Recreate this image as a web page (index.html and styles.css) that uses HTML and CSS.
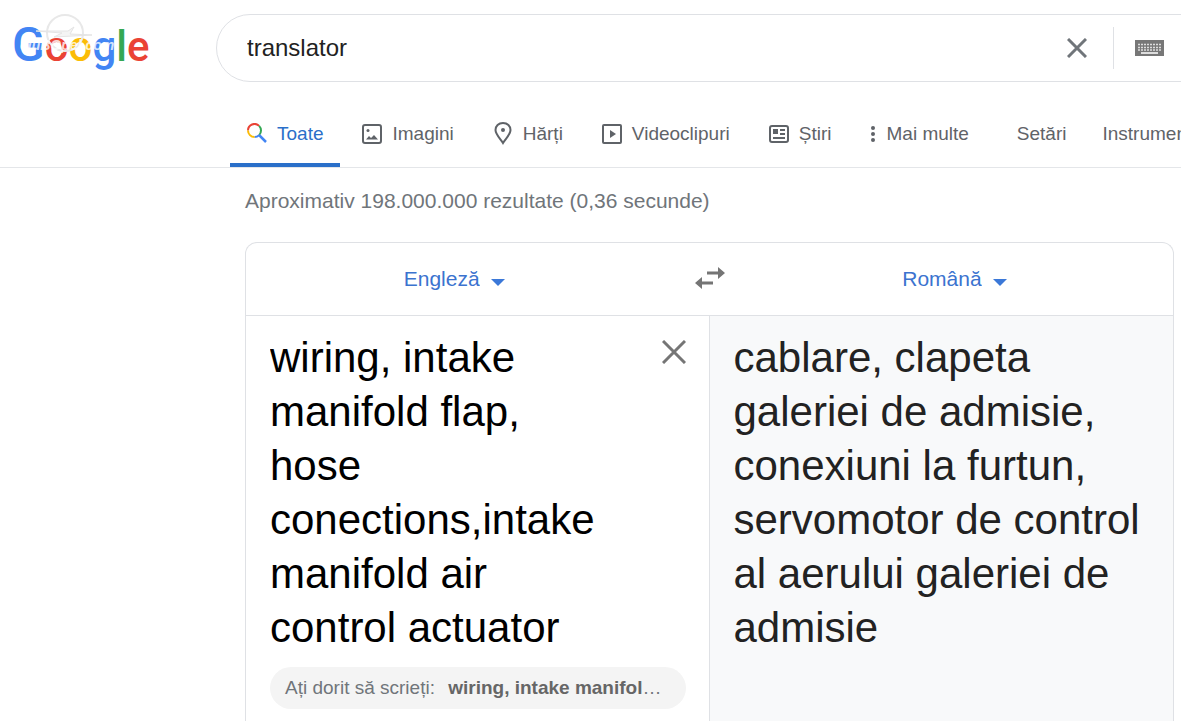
FILE: index.html
```html
<!DOCTYPE html>
<html lang="ro">
<head>
  <meta charset="UTF-8">
  <meta name="viewport" content="width=device-width, initial-scale=1.0">
  <title>translator - Căutare Google</title>
  <link rel="stylesheet" href="styles.css">
</head>
<body>
  <header class="header">
    <div class="logo">
      <a class="wordmark" href="#"><span class="capital blue">G</span><span class="red">o</span><span class="yellow">o</span><span class="blue">g</span><span class="green">l</span><span class="red">e</span></a>
      <svg class="watermark" width="120" height="60" viewBox="0 0 120 60">
        <circle cx="53" cy="19" r="18" fill="none" stroke="#e8e8e8" stroke-width="2"/>
        <path d="M24 17L56 17L62 13L58 20L80 21L42 23L50 19Z" fill="#f4f4f4" stroke="#e4e4e4" stroke-width="1"/>
        <text x="8" y="36">cluBOpel.com</text>
      </svg>
    </div>
    <form class="search">
      <input type="text" aria-label="Căutare" value="translator">
      <button type="button" aria-label="Șterge">
        <svg width="20" height="20" viewBox="0 0 20 20" stroke="#70757a" stroke-width="3"><path d="M1 1L19 19M19 1L1 19"/></svg>
      </button>
      <span class="divider"></span>
      <button type="button" aria-label="Tastatură">
        <svg width="29" height="16" viewBox="0 0 29 16">
          <rect width="29" height="16" fill="#777"/>
          <path d="M3 4.500H27M3 7.500H27M3 10H27" stroke="#ddd" stroke-width="1.500" stroke-dasharray="2 1"/>
          <path d="M6 13H23" stroke="#fff" stroke-width="1.500"/>
        </svg>
      </button>
    </form>
  </header>

  <nav class="tabs">
    <a class="tab active" href="#">
      <svg width="20" height="22" viewBox="0 0 20 22" fill="none" stroke-width="2">
        <path d="M1 7.500A6.500 6.500 0 0 1 12.100 2.900" stroke="#ea4335"/>
        <path d="M12.100 2.900A6.500 6.500 0 0 1 12.100 12.100" stroke="#34a853"/>
        <path d="M12.100 12.100A6.500 6.500 0 0 1 7.500 14" stroke="#4285f4"/>
        <path d="M7.500 14A6.500 6.500 0 0 1 1 7.500" stroke="#fbbc05"/>
        <path d="M12 12L19 19" stroke="#4285f4" stroke-width="2.500"/>
      </svg>
      Toate
    </a>
    <a class="tab" href="#">
      <svg width="20" height="20" viewBox="0 0 20 20">
        <rect x="1" y="1" width="18" height="18" rx="2" fill="none" stroke="#5f6368" stroke-width="2"/>
        <circle cx="6" cy="6.500" r="1.500" fill="#5f6368"/>
        <path d="M4 15.500L7 12L9 14L12 11L16 15.500Z" fill="#5f6368"/>
      </svg>
      Imagini
    </a>
    <a class="tab" href="#">
      <svg width="20" height="26" viewBox="0 0 20 26">
        <path d="M10 2C5.500 2 2.500 5 2.500 9C2.500 13.500 8 18.500 10 22C12 18.500 17.500 13.500 17.500 9C17.500 5 14.500 2 10 2Z" fill="none" stroke="#5f6368" stroke-width="2"/>
        <circle cx="10" cy="9" r="2" fill="#5f6368"/>
      </svg>
      Hărți
    </a>
    <a class="tab" href="#">
      <svg width="20" height="20" viewBox="0 0 20 20">
        <rect x="1" y="1" width="18" height="18" rx="1" fill="none" stroke="#5f6368" stroke-width="2"/>
        <path d="M8 6L14 10L8 14Z" fill="#5f6368"/>
      </svg>
      Videoclipuri
    </a>
    <a class="tab" href="#">
      <svg width="20" height="18" viewBox="0 0 20 18">
        <rect x="1" y="1" width="18" height="16" rx="2" fill="none" stroke="#5f6368" stroke-width="2"/>
        <path d="M4 4H9V9H4ZM11 4H16V6H11ZM11 8H16V10H11ZM4 12H16V14H4Z" fill="#5f6368"/>
      </svg>
      Știri
    </a>
    <a class="tab" href="#">
      <svg width="6" height="18" viewBox="0 0 6 18" fill="#5f6368">
        <circle cx="3" cy="3" r="2"/>
        <circle cx="3" cy="9" r="2"/>
        <circle cx="3" cy="15" r="2"/>
      </svg>
      Mai multe
    </a>
    <div class="tools">
      <a href="#">Setări</a>
      <a href="#">Instrumente</a>
    </div>
  </nav>

  <main class="results">
    <p class="stats">Aproximativ 198.000.000 rezultate (0,36 secunde)</p>

    <section class="translate">
      <div class="languages">
        <label class="language">
          <select aria-label="Din limba"><option>Engleză</option></select>
          <svg width="14" height="7" viewBox="0 0 14 7"><path d="M0 0H14L7 7Z" fill="#3b78d8"/></svg>
        </label>
        <button type="button" aria-label="Inversează limbile">
          <svg width="30" height="22" viewBox="0 0 30 22" fill="#757575">
            <path d="M12 4.500H23V0L30 6L23 12V7.500H12ZM18 14.500H7V10L0 16L7 22V17.500H18Z"/>
          </svg>
        </button>
        <label class="language target">
          <select aria-label="În limba"><option>Română</option></select>
          <svg width="14" height="7" viewBox="0 0 14 7"><path d="M0 0H14L7 7Z" fill="#3b78d8"/></svg>
        </label>
      </div>

      <div class="panels">
        <div class="source">
          <div class="entry">
            <textarea aria-label="Text sursă" rows="6" spellcheck="false">wiring, intake manifold flap, hose conections,intake manifold air control actuator</textarea>
            <button type="button" aria-label="Șterge textul">
              <svg width="24" height="24" viewBox="0 0 24 24" stroke="#757575" stroke-width="3"><path d="M1 1L23 23M23 1L1 23"/></svg>
            </button>
          </div>
          <a class="suggestion" href="#">Ați dorit să scrieți: <b>wiring, intake manifol</b>…</a>
        </div>
        <div class="translation">cablare, clapeta galeriei de admisie, conexiuni la furtun, servomotor de control al aerului galeriei de admisie</div>
      </div>
    </section>
  </main>
</body>
</html>
```

FILE: styles.css
```css
* {
  box-sizing: border-box;
}

body {
  margin: 0;
  min-height: 100vh;
  display: flex;
  flex-direction: column;
  overflow-x: hidden;
  background: #fff;
  color: #222;
  font-family: "Liberation Sans", Arial, sans-serif;
}

a {
  color: inherit;
  text-decoration: none;
}

button {
  display: flex;
  padding: 0;
  border: none;
  background: none;
  cursor: pointer;
}

svg {
  display: block;
  flex: none;
}

/* Header */
.header {
  display: flex;
  padding: 14px 0 19px 12px;
  overflow: hidden;
}

.logo {
  position: relative;
  flex: 0 0 204px;
}

.wordmark {
  font-family: Roboto, sans-serif;
  font-size: 42px;
  font-weight: 500;
  line-height: 62px;
}

.capital {
  font-size: 48px;
}

.blue { color: #4285f4; }
.red { color: #ea4335; }
.yellow { color: #fbbc05; }
.green { color: #34a853; }

.watermark {
  position: absolute;
  top: 0;
  left: 0;
  pointer-events: none;
}

.watermark text {
  font-size: 14px;
  font-weight: bold;
  font-style: italic;
  fill: #fff;
  fill-opacity: 0.8;
}

.search {
  flex: 1;
  display: flex;
  align-items: center;
  height: 68px;
  margin-right: -70px;
  padding: 0 86px 0 30px;
  border: 1px solid #dfe1e5;
  border-radius: 34px;
}

.search input {
  flex: 1;
  min-width: 0;
  padding: 0;
  border: none;
  outline: none;
  color: #222;
  font-family: inherit;
  font-size: 24px;
}

.divider {
  width: 1px;
  height: 42px;
  margin: 0 21px 0 26px;
  background: #dfe1e5;
}

/* Tabs */
.tabs {
  display: flex;
  gap: 5px;
  padding-left: 230px;
  overflow: hidden;
  border-bottom: 1px solid #e4e6e9;
  color: #5f6368;
  font-size: 19px;
  white-space: nowrap;
}

.tab {
  display: flex;
  align-items: center;
  gap: 10px;
  height: 66px;
  padding: 0 17px;
}

.tab.active {
  color: #2a6fc9;
  box-shadow: inset 0 -4px #2a6fc9;
}

.tools {
  display: flex;
  align-items: center;
  gap: 36px;
  padding-left: 26px;
}

/* Results */
.results {
  flex: 1;
  display: flex;
  flex-direction: column;
  margin: 21px 7px 0 245px;
}

.stats {
  margin: 0 0 29px;
  color: #70757a;
  font-size: 21px;
  line-height: 24px;
}

.translate {
  flex: 1;
  display: flex;
  flex-direction: column;
  overflow: hidden;
  border: 1px solid #dfe1e5;
  border-bottom: none;
  border-radius: 12px 12px 0 0;
}

.languages {
  display: grid;
  grid-template-columns: 1fr 94px 1fr;
  align-items: center;
  justify-items: center;
  height: 73px;
  padding-bottom: 2px;
  border-bottom: 1px solid #dfe1e5;
}

.language {
  display: flex;
  align-items: center;
  gap: 11px;
}

.language.target {
  margin-right: 20px;
}

.language select {
  appearance: none;
  padding: 0;
  border: none;
  background: none;
  color: #3b73cf;
  font-family: inherit;
  font-size: 21px;
}

.language svg {
  margin-top: 8px;
}

.panels {
  flex: 1;
  display: grid;
  grid-template-columns: 1fr 1fr;
}

.source {
  padding: 15px 23px 12px 24px;
  border-right: 1px solid #dfe1e5;
}

.entry {
  display: flex;
  align-items: flex-start;
  justify-content: space-between;
}

.entry textarea {
  width: 340px;
  padding: 0;
  border: none;
  outline: none;
  resize: none;
  overflow: hidden;
  color: #000;
  font-family: inherit;
  font-size: 42px;
  line-height: 54px;
}

.entry button {
  margin-top: 9px;
}

.suggestion {
  display: block;
  margin-top: 12px;
  padding: 0 15px;
  overflow: hidden;
  border-radius: 21px;
  background: #f4f4f4;
  color: #70757a;
  font-size: 19px;
  line-height: 42px;
  white-space: nowrap;
}

.suggestion b {
  margin-left: 8px;
  color: #666;
}

.translation {
  padding: 15px 24px;
  background: #f8f9fa;
  font-size: 42px;
  line-height: 54px;
}
```
